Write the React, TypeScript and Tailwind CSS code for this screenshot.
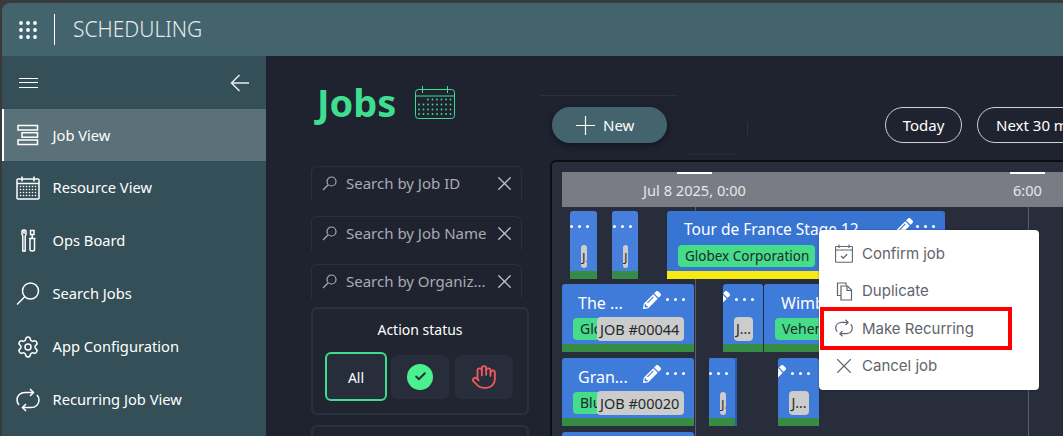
import { Hand, Check, Settings, X } from 'lucide-react';
import { FaPencilAlt } from 'react-icons/fa';
import type { ReactNode } from 'react';

function GridIcon() {
  return (
    <svg width="18" height="18" viewBox="0 0 18 18" fill="white">
      {[2, 9, 16].map((y) =>
        [2, 9, 16].map((x) => <circle key={`${x}-${y}`} cx={x} cy={y} r="1.9" />),
      )}
    </svg>
  );
}

function JobViewIcon() {
  return (
    <svg width="22" height="22" viewBox="0 0 22 22" fill="none" stroke="white" strokeWidth="1.5">
      <rect x="1" y="1.5" width="19.5" height="4.5" />
      <rect x="5" y="8.7" width="15.5" height="4.5" />
      <rect x="1" y="16" width="19.5" height="4.5" />
    </svg>
  );
}

function CalendarIcon() {
  return (
    <svg width="24" height="24" viewBox="0 0 24 24" fill="none" stroke="white" strokeWidth="1.5">
      <rect x="1" y="3" width="22" height="20" rx="1" />
      <path d="M1 7.5h22M6 .5v5M18 .5v5" />
      {[0, 1, 2, 3].map((r) =>
        [6, 9, 12, 15, 18, 21].map((x) => (
          <circle key={`${x}-${r}`} cx={x - 1.5} cy={10.5 + r * 3} r="0.8" fill="white" stroke="none" />
        )),
      )}
    </svg>
  );
}

function TitleCalendarIcon() {
  return (
    <svg width="40" height="33" viewBox="0 0 40 33" fill="none" stroke="#3fdd8f" strokeWidth="1">
      <rect x="0.5" y="3.5" width="39" height="29" rx="3" />
      <path d="M0.5 10h39M7.5 0v7M32.5 0v7" />
      {[13.5, 18.5, 23.5, 28].map((y, r) =>
        [3, 7.5, 12, 16.5, 21, 25.5, 30, 34.5].map((x) =>
          r === 0 && x < 12 ? null : (
            <circle key={`${x}-${y}`} cx={x + 1} cy={y} r="0.9" fill="#3fdd8f" stroke="none" />
          ),
        ),
      )}
    </svg>
  );
}

function ConfirmIcon() {
  return (
    <svg width="18" height="19" viewBox="0 0 18 19" fill="none" stroke="#60646c" strokeWidth="1.1">
      <rect x="0.6" y="2.5" width="16.8" height="15.8" rx="0.5" />
      <path d="M0.6 6h16.8M4 0.5v3.5M14 0.5v3.5" />
      <path d="M6 12l2.2 2.2 4-4" strokeWidth="1.3" />
    </svg>
  );
}

function OpsIcon() {
  return (
    <svg width="16" height="24" viewBox="0 0 16 24" fill="none" stroke="white" strokeWidth="1.5">
      <path d="M2 2.5c0-2 4-2 4 0v3l-.8 1.5v15H2.8V7L2 5.5z" />
      <path d="M4 1v4" />
      <path d="M10.5 1.5H14v4h-3.5zM12.2 5.5v4M9 9.5h6.5M10 9.5v11c0 2 4.5 2 4.5 0v-11" />
    </svg>
  );
}

function RecurIcon({ size = 24, color = 'white', width = 1.5 }: { size?: number; color?: string; width?: number }) {
  return (
    <svg width={size} height={size} viewBox="0 0 24 24" fill="none" stroke={color} strokeWidth={width}>
      <path d="M17 4.5H9C4.5 4.5 1 7.500 1 12c0 2 .8 3.700 2 5" />
      <path d="M14 1l3.500 3.500L14 8" />
      <path d="M7 19.500h8c4.500 0 8-3 8-7.500 0-2-.8-3.700-2-5" />
      <path d="M10 23l-3.500-3.500L10 16" />
    </svg>
  );
}

function DuplicateIcon() {
  return (
    <svg width="17" height="19" viewBox="0 0 17 19" fill="none" stroke="#60646c" strokeWidth="1.2">
      <path d="M10 3.5V1H1.5v12.5H5" />
      <path d="M5 4h6.5L15.500 8v10H5z" />
      <path d="M11 4v4.500h4.500" />
    </svg>
  );
}

function NavRow({ icon, label, active }: { icon: ReactNode; label: string; active?: boolean }) {
  return (
    <div
      className={
        active
          ? 'flex h-[52px] items-center border-l-2 border-white bg-[#5b7179] text-[14.7px] text-white'
          : 'flex h-[53px] items-center border-l-2 border-transparent text-[14.7px] text-white'
      }
    >
      <span className="flex w-[48.5px] shrink-0 justify-center">{icon}</span>
      <span>{label}</span>
    </div>
  );
}

function SearchBox({ label }: { label: string }) {
  return (
    <div className="flex h-[34px] w-[211px] items-center rounded-t-md border-x border-t border-[#2b303d] pl-[10px] pr-[5px] text-[15px] text-[#a9abb0]">
      <svg width="15" height="15" viewBox="0 0 15 15" fill="none" stroke="#a9abb0" strokeWidth="1.2">
        <circle cx="9.5" cy="5.5" r="4.5" />
        <path d="M6 9 1 14" />
      </svg>
      <span className="ml-[9px] flex-1 whitespace-nowrap">{label}</span>
      <X className="h-[23px] w-[23px] shrink-0 text-[#c0c2c6]" strokeWidth={1.3} />
    </div>
  );
}

function Dots() {
  return (
    <div className="mt-[14px] flex shrink-0 gap-[5px]">
      <span className="h-[3px] w-[3px] rounded-full bg-white" />
      <span className="h-[3px] w-[3px] rounded-full bg-white" />
      <span className="h-[3px] w-[3px] rounded-full bg-white" />
    </div>
  );
}

function Pencil() {
  return <FaPencilAlt className="mt-[7px] h-[18px] w-[18px] shrink-0 text-white" />;
}

type BarProps = {
  left: number;
  top: number;
  width: number;
  stripe?: string;
  fill?: string;
  head?: ReactNode;
  children?: ReactNode;
};

// job bars sit at their time position on the schedule, the inside is plain flow
function Bar({ left, top, width, stripe = 'bg-[#368c44]', fill = 'bg-[#3f7bd8]', head, children }: BarProps) {
  return (
    <div
      className={`absolute flex h-[68px] flex-col overflow-hidden rounded-t-[3px] ${fill}`}
      style={{ left, top, width }}
    >
      {head}
      <div className="flex h-[24px] shrink-0 items-center pl-[11px]">{children}</div>
      <div className={`mt-auto h-[8px] shrink-0 ${stripe}`} />
    </div>
  );
}

function Head({
  title,
  titleClass = 'mt-[8px] text-[16px]',
  gap = 'gap-[5px]',
  pad = 'pr-[9px]',
  pencil = true,
  dots = true,
}: {
  title?: string;
  titleClass?: string;
  gap?: string;
  pad?: string;
  pencil?: boolean;
  dots?: boolean;
}) {
  return (
    <div className={`flex h-[33px] shrink-0 items-start pl-[16px] ${title ? 'justify-start' : 'justify-end'} ${gap} ${pad}`}>
      {title ? (
        <span className={`mr-auto whitespace-nowrap leading-[22px] text-white ${titleClass}`}>{title}</span>
      ) : null}
      {pencil ? <Pencil /> : null}
      {dots ? <Dots /> : null}
    </div>
  );
}

function ClientChip({ label, className = '' }: { label: string; className?: string }) {
  return (
    <div className={`h-[22px] shrink-0 overflow-hidden whitespace-nowrap rounded-[4px] bg-[#45dc8a] pl-[7px] leading-[22px] text-[#1f2a2a] ${className}`}>
      {label}
    </div>
  );
}

function IdChip({ label, className = '' }: { label: string; className?: string }) {
  return (
    <div className={`h-[24px] shrink-0 overflow-hidden whitespace-nowrap rounded-[4px] bg-[#cccccc] leading-[24px] text-[#1f2a2a] ${className}`}>
      {label}
    </div>
  );
}

function MenuItem({ icon, label }: { icon: ReactNode; label: string }) {
  return (
    <div className="flex h-[37.4px] items-center pl-[16px] font-['Inter',sans-serif] text-[15px] text-[#60646c]">
      <span className="flex w-[18px] justify-center">{icon}</span>
      <span className="ml-[9px] pt-px">{label}</span>
    </div>
  );
}

export default function App() {
  return (
    <div className="h-[436px] w-[1063px] overflow-hidden bg-[#3a3a3a] pl-[2px] pt-[3px] font-['Noto_Sans',sans-serif]">
      <div className="flex h-[433px] flex-col overflow-hidden rounded-tl-lg">
        <header className="flex h-[53px] shrink-0 items-center bg-[#43646d] pl-[17px]">
          <GridIcon />
          <div className="ml-[17px] h-[31px] w-px bg-white" />
          <span className="ml-[18px] text-[21px] font-light text-[#e4eaec]">SCHEDULING</span>
        </header>
        <div className="flex min-h-0 flex-1">
          <aside className="w-[264px] shrink-0 bg-[#344f57]">
            <div className="flex h-[53px] items-center justify-between pl-[17px] pr-[16px]">
              <div className="flex w-[19px] flex-col gap-[3.5px]">
                <div className="h-px bg-white" />
                <div className="h-px bg-white" />
                <div className="h-px bg-white" />
              </div>
              <svg width="20" height="18" viewBox="0 0 20 18" fill="none" stroke="#e8eced" strokeWidth="1.5">
                <path d="M19 9H1.5M9.5 1 1.5 9l8 8" />
              </svg>
            </div>
            <NavRow active icon={<JobViewIcon />} label="Job View" />
            <NavRow icon={<CalendarIcon />} label="Resource View" />
            <NavRow icon={<OpsIcon />} label="Ops Board" />
            <NavRow
              icon={
                <svg width="24" height="24" viewBox="0 0 24 24" fill="none" stroke="white" strokeWidth="1.5">
                  <circle cx="14.5" cy="9" r="8" />
                  <path d="M8.5 15 1 22.5" />
                </svg>
              }
              label="Search Jobs"
            />
            <NavRow icon={<Settings className="h-[24px] w-[24px]" strokeWidth={1.5} color="white" />} label="App Configuration" />
            <NavRow icon={<RecurIcon />} label="Recurring Job View" />
          </aside>

          <main className="flex min-w-0 flex-1 bg-[#1f2330]">
            <div className="ml-[45px] w-[229px] shrink-0">
              <div className="flex h-[110px] items-start pl-[6px] pt-[21px]">
                <h1 className="text-[38px] font-bold leading-[50px] text-[#3fdd8f]">Jobs</h1>
                <span className="ml-[19px] mt-[9px]">
                  <TitleCalendarIcon />
                </span>
              </div>
              <div className="flex flex-col">
                <SearchBox label="Search by Job ID" />
                <div className="mt-[16px]">
                  <SearchBox label="Search by Job Name" />
                </div>
                <div className="mt-[14px]">
                  <SearchBox label="Search by Organiz..." />
                </div>
              </div>
              <div className="mt-[9px] h-[108px] w-[218px] rounded-md border-2 border-[#2b303d] bg-[#20252f]">
                <p className="pt-[10px] text-center text-[14px] text-white">Action status</p>
                <div className="mt-[12px] flex items-center pl-[12px]">
                  <div className="flex h-[49px] w-[62px] items-center justify-center rounded-md border-2 border-[#3fdd8f] bg-[#282d3c] pt-[2px] text-[14px] text-white">
                    All
                  </div>
                  <div className="ml-[4px] flex h-[44px] w-[58px] items-center justify-center rounded-md bg-[#282d3c]">
                    <span className="flex h-[26px] w-[26px] items-center justify-center rounded-full bg-[#4bf08f]">
                      <Check className="h-[13px] w-[13px] text-[#282d3c]" strokeWidth={3.5} />
                    </span>
                  </div>
                  <div className="ml-[6px] flex h-[44px] w-[58px] items-center justify-center rounded-md bg-[#282d3c]">
                    <Hand className="h-[26px] w-[26px] text-[#f0585c]" strokeWidth={1.7} />
                  </div>
                </div>
              </div>
              <div className="mt-[10px] h-[40px] w-[218px] rounded-md border-2 border-[#2b303d] bg-[#20252f]" />
            </div>

            <div className="relative min-w-0 flex-1">
              <div className="mt-[39px] h-px w-[137px] bg-[#2b303d]" />
              <div className="absolute left-[207px] top-[66px] h-[14px] w-px bg-[#2b303d]" />
              <div className="absolute left-[148px] top-[98px] h-px w-[50px] bg-[#262a37]" />
              <div className="mt-[11px] flex h-[36px] items-center pl-[12px]">
                <button type="button" className="flex h-[36px] w-[115px] shrink-0 items-center justify-start rounded-full bg-[#43646d] pl-[24px] text-[15px] text-white shadow-[0_2px_6px_rgba(0,0,0,0.45)]">
                  <svg width="19" height="19" viewBox="0 0 19 19" stroke="white" strokeWidth="1.2" className="mr-[8px]">
                    <path d="M0 9.5h19M9.5 0v19" />
                  </svg>
                  New
                </button>
                <button type="button" className="ml-[218px] h-[36px] w-[77px] shrink-0 rounded-full border border-[#cfd1d4] text-[15px] text-white">
                  Today
                </button>
                <button type="button" className="ml-[15px] h-[36px] w-[130px] shrink-0 whitespace-nowrap rounded-full border border-[#cfd1d4] pl-[18px] text-left text-[15px] text-white">
                  Next 30 min
                </button>
              </div>
              <div className="relative ml-[10px] mt-[17px] h-[280px] w-[530px] overflow-hidden rounded-tl-md border-l-2 border-t-2 border-[#0c0e14] bg-[#282d3c]">
                <div className="ml-[10px] mt-[10px] h-[35px] bg-[#7a7c85]" />
                <div className="absolute left-[90px] top-[10px] flex w-[105px] flex-col items-center text-[14.6px] text-[#e6e6e8]">
                  <div className="h-[2px] w-[35px] bg-white" />
                  <span className="mt-[6px] whitespace-nowrap">Jul 8 2025, 0:00</span>
                </div>
                <div className="absolute left-[458px] top-[10px] flex w-[35px] flex-col items-center text-[14.6px] text-[#e6e6e8]">
                  <div className="h-[2px] w-[35px] bg-white" />
                  <span className="mt-[6px] whitespace-nowrap">6:00</span>
                </div>
                <div className="absolute bottom-0 left-[143px] top-[45px] w-px bg-[#5a5e6b]" />
                <div className="absolute bottom-0 left-[476px] top-[45px] w-px bg-[#5a5e6b]" />

                <Bar left={18} top={49} width={27} fill="bg-[#4680dc]" head={<Head pencil={false} pad="pr-[8px]" />}>
                  <IdChip label="J..." className="!h-[23px] w-[6px] pl-[1px] text-[13px]" />
                </Bar>
                <Bar left={60} top={49} width={26} fill="bg-[#4680dc]" head={<Head pencil={false} pad="pr-[6px]" />}>
                  <IdChip label="J..." className="!h-[23px] w-[5px] pl-[1px] text-[13px]" />
                </Bar>
                <Bar
                  left={115}
                  top={49}
                  width={278}
                  stripe="bg-[#f7e912]"
                  fill="bg-[#3874d2]"
                  head={<Head title="Tour de France Stage 12" titleClass="mt-[7px] ml-px text-[15.5px]" gap="gap-[3px]" pad="pr-[10px]" />}
                >
                  <ClientChip label="Globex Corporation" className="w-[137px] text-[13.5px]" />
                </Bar>

                <Bar left={10} top={122} width={132} head={<Head title="The ..." />}>
                  <ClientChip label="Globex" className="-mr-[26px] w-[50px] text-[14px]" />
                  <IdChip label="JOB #00044" className="w-[87px] pl-[3px] text-[14.5px]" />
                </Bar>
                <Bar left={171} top={122} width={40} head={<Head />}>
                  <IdChip label="J..." className="w-[19px] text-center text-[14px]" />
                </Bar>
                <Bar left={212} top={122} width={60} head={<Head title="Wimbledon" titleClass="mt-[8px] ml-px text-[16px]" pencil={false} dots={false} />}>
                  <ClientChip label="Vehement" className="w-[60px] text-[14px]" />
                </Bar>

                <Bar left={10} top={196} width={132} head={<Head title="Gran..." />}>
                  <ClientChip label="Blue" className="-mr-[26px] w-[50px] text-[14px]" />
                  <IdChip label="JOB #00020" className="w-[87px] pl-[3px] text-[14.5px]" />
                </Bar>
                <div className="absolute left-[157px] top-[196px] h-[68px] w-[28px] bg-[#2b5fae]" />
                <Bar left={157} top={196} width={26} head={<Head pencil={false} pad="pr-[7px]" />}>
                  <IdChip label="J..." className="!h-[23px] w-[6px] pl-[1px] text-[13px]" />
                </Bar>
                <Bar left={226} top={196} width={41} head={<Head />}>
                  <IdChip label="J..." className="w-[20px] text-center text-[14px]" />
                </Bar>
                <Bar left={10} top={270} width={132} />

                {/* context menu */}
                <div className="absolute left-[267px] top-[68px] h-[160px] w-[220px] rounded-[4px] bg-white py-[5px] shadow-[0_0_2px_rgba(0,0,0,0.4)]">
                  <MenuItem icon={<ConfirmIcon />} label="Confirm job" />
                  <MenuItem icon={<DuplicateIcon />} label="Duplicate" />
                  <MenuItem icon={<RecurIcon size={18} color="#60646c" width={1.6} />} label="Make Recurring" />
                  <MenuItem icon={<X className="h-[26px] w-[26px] shrink-0" strokeWidth={1} />} label="Cancel job" />
                  <div className="absolute left-[1px] top-[77px] h-[43px] w-[192px] border-4 border-[#ff0000]" />
                </div>
              </div>
            </div>
          </main>
        </div>
      </div>
    </div>
  );
}
